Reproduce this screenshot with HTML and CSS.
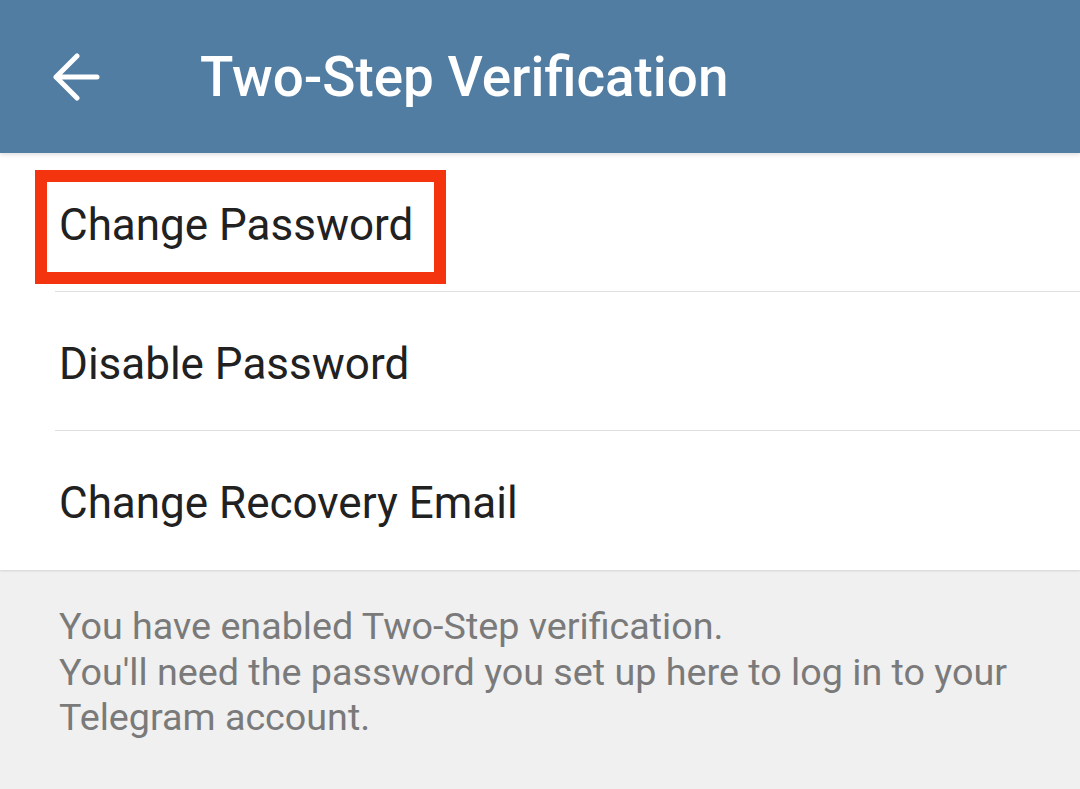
FILE: index.html
```html
<!DOCTYPE html>
<html>
<head>
<meta charset="utf-8">
<link rel="stylesheet" href="styles.css">
</head>
<body>
<div class="screen">
  <header class="appbar">
    <div class="back">
      <svg width="48" height="48" viewBox="0 0 48 48"><path d="M45 24H4M25 3L4 24l21 21" fill="none" stroke="#fff" stroke-width="5" stroke-linecap="round" stroke-linejoin="round"/></svg>
    </div>
    <h1 class="title">Two-Step Verification</h1>
  </header>
  <ul class="list">
    <li class="row highlighted"><span class="label">Change Password</span><span class="mark"></span></li>
    <li class="row"><span class="label">Disable Password</span></li>
    <li class="row"><span class="label">Change Recovery Email</span></li>
  </ul>
  <div class="info">
    <p>You have enabled Two-Step verification.<br>You'll need the password you set up here to log in to your Telegram account.</p>
  </div>
</div>
</body>
</html>
```

FILE: styles.css
```css
* { box-sizing: border-box; }
html, body { margin: 0; padding: 0; }
body {
  width: 1080px;
  height: 789px;
  overflow: hidden;
  font-family: Roboto, "Noto Sans", sans-serif;
  background: #f0f0f0;
}
.screen { display: flex; flex-direction: column; height: 789px; }
.appbar {
  height: 153px;
  background: #527da3;
  display: flex;
  align-items: center;
  padding-left: 52px;
  box-shadow: 0 2px 4px rgba(0,0,0,0.12);
  position: relative;
  z-index: 2;
  flex: none;
}
.back { width: 48px; height: 48px; display: flex; }
.title {
  margin: 0 0 0 100px;
  color: #fff;
  font-weight: 500;
  font-size: 54.8px;
}
.list {
  list-style: none;
  margin: 0;
  padding: 0;
  background: #fff;
  flex: none;
  box-shadow: 0 1px 2px rgba(0,0,0,0.12);
}
.row {
  height: 139px;
  display: flex;
  align-items: center;
  padding-left: 59px;
  padding-top: 5px;
  position: relative;
}
.row + .row::before {
  content: "";
  position: absolute;
  left: 55px;
  right: 0;
  top: -1px;
  height: 1px;
  background: #e0e0e0;
}
.label { font-size: 44px; color: #212121; }
.mark {
  position: absolute;
  left: 35px;
  top: 17px;
  width: 411px;
  height: 114px;
  border: 12px solid #f4330f;
}
.info { padding: 34px 60px 0 59px; }
.info p {
  margin: 0;
  font-size: 37.7px;
  line-height: 45.5px;
  color: #7a7a7a;
}
```
